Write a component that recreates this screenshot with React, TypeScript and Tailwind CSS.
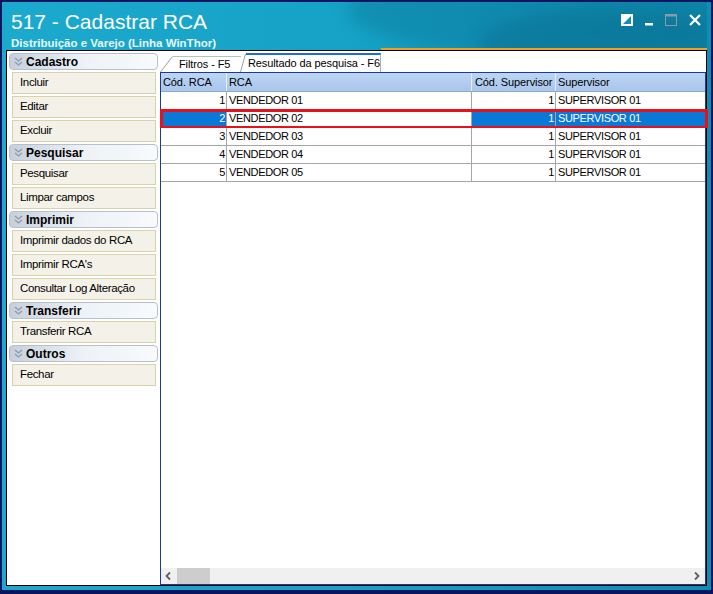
import React from 'react';

const sections = [
  { title: 'Cadastro', items: ['Incluir', 'Editar', 'Excluir'] },
  { title: 'Pesquisar', items: ['Pesquisar', 'Limpar campos'] },
  { title: 'Imprimir', items: ['Imprimir dados do RCA', "Imprimir RCA's", 'Consultar Log Alteração'] },
  { title: 'Transferir', items: ['Transferir RCA'] },
  { title: 'Outros', items: ['Fechar'] },
];

const rows = [1, 2, 3, 4, 5].map((n) => ({
  cod: n,
  rca: `VENDEDOR 0${n}`,
  codSup: 1,
  sup: 'SUPERVISOR 01',
}));

const Chevron = () => (
  <svg width="9" height="10" viewBox="0 0 9 10" className="shrink-0">
    <path d="M1 1 L4.5 4 L8 1 M1 5 L4.5 8 L8 5" fill="none" stroke="#8d9aab" strokeWidth="1.3" />
  </svg>
);

const SectionHeader: React.FC<{ title: string }> = ({ title }) => (
  <div className="mx-[2px] h-[17px] flex items-center gap-[3px] pl-[4px] rounded-[4px] border border-[#b4c0ce] bg-gradient-to-r from-[#c6d0dc] via-[#eef2f6] to-[#f8fafc]">
    <Chevron />
    <span className="font-bold text-[12px] text-black leading-none">{title}</span>
  </div>
);

const SideButton: React.FC<{ label: string }> = ({ label }) => (
  <div className="ml-[5px] mr-[4px] h-[22px] flex items-center pl-[7px] border border-[#d9d3ac] bg-[#f4f2e8] text-[11.5px] tracking-[-0.35px] text-black whitespace-nowrap">
    {label}
  </div>
);

const App: React.FC = () => {
  return (
    <div
      className="w-[713px] h-[594px] bg-[#0a1560] pt-[2px] pl-[2px] pr-[2px] pb-[4px] overflow-hidden"
      style={{ fontFamily: '"Liberation Sans", Arial, sans-serif' }}
    >
      <div className="relative h-full flex flex-col px-[4px] pb-[4px] bg-gradient-to-r from-[#1ba9cd] via-[#15a2c6] to-[#0e8db2]">
        {/* title area */}
        <div className="relative h-[48px] shrink-0 overflow-hidden">
          <div className="absolute right-[-60px] top-[-40px] w-[420px] h-[95px] rounded-[50%] bg-[#0a6f91] opacity-35 blur-sm" />
          <div className="absolute right-[-30px] top-[8px] w-[260px] h-[70px] rounded-[50%] bg-[#0a6a8b] opacity-40 blur-sm" />
          <div className="relative pl-[5px] pt-[8px] text-white">
            <div className="text-[21px] leading-[23px]">517 - Cadastrar RCA</div>
            <div className="text-[11.5px] font-bold leading-[14px] mt-[3px] text-[#eaf6fb]">
              Distribuição e Varejo (Linha WinThor)
            </div>
          </div>
          <div className="absolute left-[375px] right-0 bottom-0 h-[2px] bg-[#f0a020]" />
          <div className="absolute right-[6px] top-[12px] flex items-center gap-[12px]">
            <svg width="12" height="12" viewBox="0 0 12 12">
              <rect x="0.5" y="0.5" width="11" height="11" fill="#fff" stroke="#fff" />
              <path d="M2 10 L10 2 L10 10 Z" fill="#0f8fb3" />
            </svg>
            <svg width="8" height="12" viewBox="0 0 8 12">
              <rect x="0" y="9" width="8" height="2.5" fill="#fff" />
            </svg>
            <svg width="12" height="12" viewBox="0 0 12 12">
              <rect x="0.5" y="0.5" width="11" height="11" fill="none" stroke="#8a9aa6" />
              <rect x="0.5" y="0.5" width="11" height="2" fill="#8a9aa6" />
            </svg>
            <svg width="12" height="12" viewBox="0 0 12 12">
              <path d="M1 1 L11 11 M11 1 L1 11" stroke="#fff" strokeWidth="2.2" />
            </svg>
          </div>
        </div>

        {/* content */}
        <div className="flex-1 flex border border-black bg-white min-h-0">
          {/* left panel */}
          <div className="w-[153px] shrink-0 flex flex-col gap-[2px] pt-[2px]">
            {sections.map((s) => (
              <React.Fragment key={s.title}>
                <SectionHeader title={s.title} />
                {s.items.map((it) => (
                  <SideButton key={it} label={it} />
                ))}
              </React.Fragment>
            ))}
          </div>

          {/* right panel */}
          <div className="flex-1 flex flex-col min-w-0">
            {/* tabs */}
            <div className="h-[21px] shrink-0 flex items-end text-[11px] tracking-[-0.1px] text-black whitespace-nowrap">
              <div className="flex items-end h-[16px]">
                <svg width="13" height="16" viewBox="0 0 13 16" className="shrink-0">
                  <path d="M0.5 16 L12.5 0.5" stroke="#9aa0a8" strokeWidth="1" fill="none" />
                </svg>
                <div className="h-[16px] w-[68px] border-t border-[#b8bec6] flex items-center pl-[6px] leading-none">
                  Filtros - F5
                </div>
              </div>
              <div className="flex items-end h-[19px] -ml-[1px]">
                <svg width="6" height="19" viewBox="0 0 6 19" className="shrink-0">
                  <path d="M0.5 19 L5.5 1" stroke="#9aa0a8" strokeWidth="1" fill="none" />
                </svg>
                <div className="h-[19px] w-[135px] border-t-2 border-t-[#1c6fd0] border-r border-r-[#a9aeb5] flex items-center pl-[2px] leading-none">
                  Resultado da pesquisa - F6
                </div>
              </div>
            </div>

            {/* grid */}
            <div className="relative flex-1 flex flex-col border border-[#1a3a98] min-h-0 text-[11px] tracking-[-0.35px] text-black whitespace-nowrap">
              <div className="flex h-[19px] shrink-0 bg-gradient-to-b from-[#bcd5f3] to-[#a9c6ec] border-b border-[#8ea9cc] leading-none tracking-[-0.1px]">
                <div className="w-[66px] shrink-0 flex items-center pl-[2px] border-r border-[#e4edf8]">Cód. RCA</div>
                <div className="w-[245px] shrink-0 flex items-center pl-[2px] border-r border-[#e4edf8]">RCA</div>
                <div className="w-[84px] shrink-0 flex items-center pl-[3px] border-r border-[#e4edf8]">Cód. Supervisor</div>
                <div className="flex-1 flex items-center pl-[2px]">Supervisor</div>
              </div>
              {rows.map((r) => {
                const sel = r.cod === 2;
                return (
                  <div key={r.cod} className="flex h-[18px] shrink-0 border-b border-[#a6a6a6] leading-none">
                    <div className={`w-[66px] shrink-0 flex items-center justify-end pr-[1px] border-r border-[#a6a6a6] ${sel ? 'bg-[#0a78d6] text-white' : ''}`}>
                      {r.cod}
                    </div>
                    <div className="w-[245px] shrink-0 flex items-center pl-[2px] border-r border-[#a6a6a6]">{r.rca}</div>
                    <div className={`w-[84px] shrink-0 flex items-center justify-end pr-[1px] border-r border-[#a6a6a6] ${sel ? 'bg-[#0a78d6] text-white' : ''}`}>
                      {r.codSup}
                    </div>
                    <div className={`flex-1 flex items-center pl-[2px] ${sel ? 'bg-[#0a78d6] text-white' : ''}`}>{r.sup}</div>
                  </div>
                );
              })}
              <div className="flex-1" />
              {/* horizontal scrollbar */}
              <div className="h-[16px] shrink-0 flex items-center bg-[#f0f0f0]">
                <svg width="16" height="16" viewBox="0 0 16 16" className="shrink-0">
                  <path d="M9 4.5 L5.5 8 L9 11.5" stroke="#606060" strokeWidth="1.8" fill="none" />
                </svg>
                <div className="w-[33px] h-[16px] bg-[#cdcdcd]" />
                <div className="flex-1" />
                <svg width="16" height="16" viewBox="0 0 16 16" className="shrink-0">
                  <path d="M6 4.5 L9.5 8 L6 11.5" stroke="#606060" strokeWidth="1.8" fill="none" />
                </svg>
              </div>
              {/* highlight annotation */}
              <div className="absolute left-[-1px] right-[-3px] top-[36px] h-[19px] border-[3px] border-b-2 border-[#e8101a] pointer-events-none" />
            </div>
          </div>
        </div>
      </div>
    </div>
  );
};

export default App;
